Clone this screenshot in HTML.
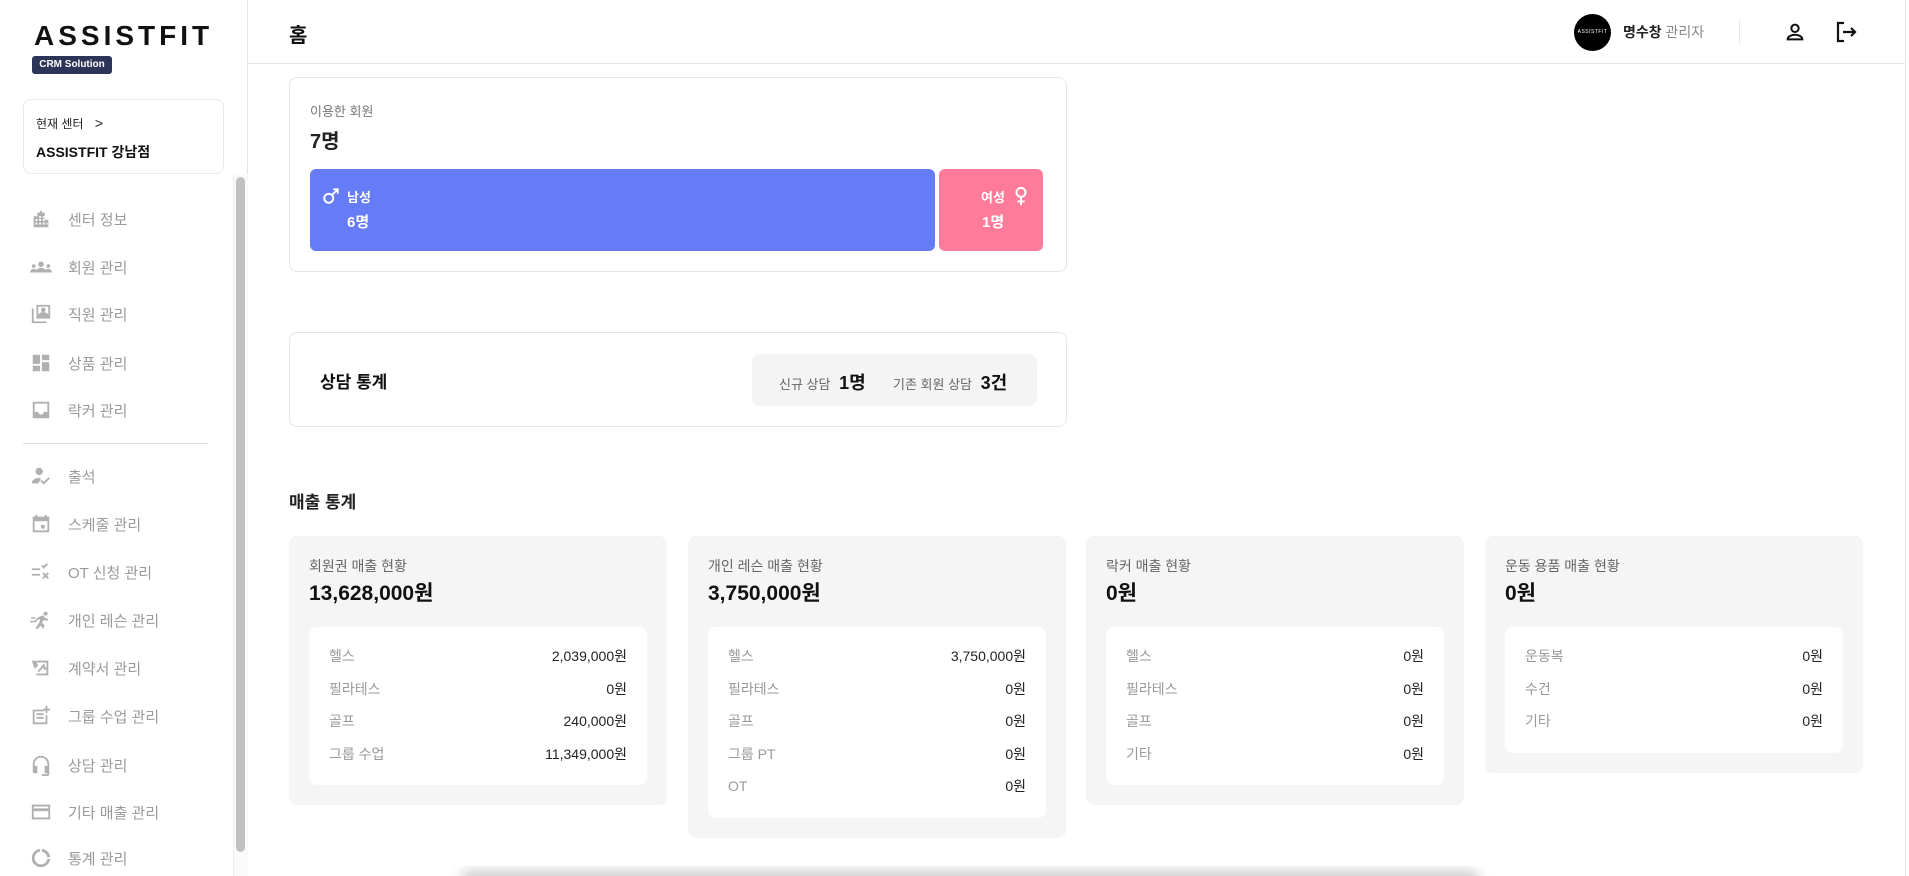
<!DOCTYPE html>
<html><head><meta charset="utf-8">
<style>
*{margin:0;padding:0;box-sizing:border-box}
html,body{width:1909px;height:876px;max-height:876px;overflow:hidden;background:#fff;font-family:"Liberation Sans","Noto Sans CJK KR",sans-serif;color:#111}
body{position:relative}
.abs{position:absolute}
#side{position:absolute;left:0;top:0;width:248px;height:876px;border-right:1px solid #e6e6e6;background:#fff}
.logo{left:34px;top:20px;font-size:28px;font-weight:700;letter-spacing:4px;color:#111;font-family:"Liberation Sans",sans-serif}
.badge{left:32px;top:56px;width:80px;height:18px;background:#2c3557;border-radius:3px;color:#fff;font-size:10px;font-weight:700;text-align:center;line-height:18px}
.cbox{left:23px;top:99px;width:201px;height:75px;border:1px solid #e8e8e8;border-radius:8px}
.menu{left:30px;font-size:15px;color:#9a9a9a;display:flex;align-items:center;height:24px}
.menu svg{width:22px;height:22px;margin-right:16px;fill:#b0b0b0}
#head{position:absolute;left:248px;top:0;right:4px;height:64px;border-bottom:1px solid #e6e6e6;background:#fff}
.card{border:1px solid #e6e6e6;border-radius:8px;background:#fff}
.sc{position:absolute;top:536px;width:378px;background:#f5f5f5;border-radius:8px;padding:20px}
.sc .lb{font-size:14px;line-height:18px;color:#666;margin-top:1px}
.sc .am{font-size:21px;line-height:26px;font-weight:700;margin-top:6px;color:#111}
.sc .in{background:#fff;border-radius:8px;margin-top:20px;padding:13px 20px 15px 20px}
.row{display:flex;justify-content:space-between;font-size:14px;height:32.5px;line-height:32.5px}
.row span:first-child{color:#999}
.row span:last-child{color:#222}
</style></head><body>
<div id="side">
  <div class="abs logo">ASSISTFIT</div>
  <div class="abs badge">CRM Solution</div>
  <div class="abs cbox">
    <div class="abs" style="left:12px;top:15px;font-size:12px;color:#222">현재 센터 <span style="margin-left:8px;font-size:14px">&gt;</span></div>
    <div class="abs" style="left:12px;top:42px;font-size:14px;font-weight:700;color:#111">ASSISTFIT 강남점</div>
  </div>
  <div class="abs" style="left:233px;top:174px;width:15px;height:702px;background:#fafafa;border-left:1px solid #eee"></div>
  <div class="abs" style="left:236px;top:177px;width:9px;height:675px;background:#c1c1c1;border-radius:5px"></div>
  <div class="abs" style="left:23px;top:443px;width:185px;height:1px;background:#e0e0e0"></div>

  <div class="abs menu" style="top:207px"><svg viewBox="0 0 24 24"><path d="M4 9h4V5h3V3h2v2h3v8h4v8H4z" /><path fill="#fff" d="M6 12h2v2H6zm0 4h2v2H6zm4-7h2v2h-2zm0 3h2v2h-2zm0 4h2v2h-2zm4-7h2v2h-2zm0 3h2v2h-2zm0 4h2v2h-2zm4 0h1v2h-1z"/></svg>센터 정보</div>
  <div class="abs menu" style="top:255px"><svg viewBox="0 0 24 24"><circle cx="12" cy="9" r="3"/><path d="M6 18c0-3 3-5 6-5s6 2 6 5z"/><circle cx="4" cy="11" r="2"/><circle cx="20" cy="11" r="2"/><path d="M0 18c0-2 2-4 4-4s3 1 3 2v2zm24 0c0-2-2-4-4-4s-3 1-3 2v2z"/></svg>회원 관리</div>
  <div class="abs menu" style="top:302px"><svg viewBox="0 0 24 24"><path d="M7 2h15v15H7zM2 6h2v14h14v2H2z"/><path fill="#fff" d="M9 4h11v9c-1-2-3-3-5.5-3S10 11 9 13z"/><circle cx="14.5" cy="7.5" r="2.5" fill="#b0b0b0"/></svg>직원 관리</div>
  <div class="abs menu" style="top:351px"><svg viewBox="0 0 24 24"><path d="M3 3h8v10H3zm10 0h8v6h-8zM3 15h8v6H3zm10-4h8v10h-8z"/></svg>상품 관리</div>
  <div class="abs menu" style="top:398px"><svg viewBox="0 0 24 24"><path d="M3 3h18v18H3zm2 2v9h4a3 3 0 0 0 6 0h4V5z"/></svg>락커 관리</div>

  <div class="abs menu" style="top:464px"><svg viewBox="0 0 24 24"><circle cx="10" cy="7" r="4"/><path d="M2 20c0-4 4-6 8-6l2 1-3 5z"/><path d="M12 17l3 3 6-6" stroke="#b0b0b0" stroke-width="2" fill="none"/></svg>출석</div>
  <div class="abs menu" style="top:512px"><svg viewBox="0 0 24 24"><path d="M3 4h18v17H3zm2 5v10h14V9z"/><path d="M6 2h2v3H6zm10 0h2v3h-2zM12 13h4v4h-4z"/></svg>스케줄 관리</div>
  <div class="abs menu" style="top:560px"><svg viewBox="0 0 24 24"><path d="M2 8h9v2H2zm0 6h9v2H2z"/><path d="M13 5l2 2 4-4M14 13l6 6m0-6l-6 6" stroke="#b0b0b0" stroke-width="2" fill="none"/></svg>OT 신청 관리</div>
  <div class="abs menu" style="top:608px"><svg viewBox="0 0 24 24"><circle cx="17" cy="5" r="2.2"/><path d="M9 9l5-2 3 3 3 1-1 2-4-1-2 3 3 3-2 4-2-4-4 4-2-1 4-6 1-4-3 1-2 3-2-1zM1 9h5v1.5H1zm-1 4h5v1.5H0z"/></svg>개인 레슨 관리</div>
  <div class="abs menu" style="top:656px"><svg viewBox="0 0 24 24"><path d="M5 4h15v16H7v-2h11V6H7V4zM2 4h4l3 5-4 4z"/><path d="M9 16l6-7 1 4 2-1" stroke="#b0b0b0" stroke-width="2" fill="none"/></svg>계약서 관리</div>
  <div class="abs menu" style="top:704px"><svg viewBox="0 0 24 24"><path d="M3 5h12v2H5v12h12v-8h2v10H3z"/><path d="M7 9h8v2H7zm0 4h8v2H7zm10-12h2v3h3v2h-3v3h-2V6h-3V4h3z"/></svg>그룹 수업 관리</div>
  <div class="abs menu" style="top:753px"><svg viewBox="0 0 24 24"><path d="M12 2a9 9 0 0 0-9 9v8a2 2 0 0 0 2 2h3v-8H5v-2a7 7 0 0 1 14 0v2h-3v8h3v1h-6v2h6a2 2 0 0 0 2-2V11a9 9 0 0 0-9-9z"/></svg>상담 관리</div>
  <div class="abs menu" style="top:800px"><svg viewBox="0 0 24 24"><path d="M2 4h20v16H2zm2 2v2h16V6zm0 5v7h16v-7z"/></svg>기타 매출 관리</div>
  <div class="abs menu" style="top:846px"><svg viewBox="0 0 24 24"><path d="M13 2.05v3.03A7 7 0 0 1 18.92 11h3.03A10 10 0 0 0 13 2.05zM11 2.05A10 10 0 0 0 12 22a10 10 0 0 0 9.95-9h-3.03A7 7 0 1 1 11 5.08z"/></svg>통계 관리</div>
</div>

<div id="head">
  <div class="abs" style="left:41px;top:19px;font-size:20px;font-weight:700">홈</div>
  <div class="abs" style="left:1326px;top:14px;width:37px;height:37px;border-radius:50%;background:#000;color:#fff;font-size:5px;text-align:center;line-height:37px;letter-spacing:.5px">ASSISTFIT</div>
  <div class="abs" style="left:1375px;top:22px;font-size:14px"><b style="color:#222">명수창</b> <span style="color:#888">관리자</span></div>
  <div class="abs" style="left:1491px;top:20px;width:1px;height:24px;background:#e6e6e6"></div>
  <svg class="abs" style="left:1536px;top:21px" width="22" height="22" viewBox="0 0 24 24"><circle cx="12" cy="8" r="4" fill="none" stroke="#111" stroke-width="2.2"/><path d="M4 20c0-3 4-5 8-5s8 2 8 5z" fill="none" stroke="#111" stroke-width="2.2"/></svg>
  <svg class="abs" style="left:1586px;top:20px" width="24" height="24" viewBox="0 0 24 24"><path d="M10 3H4v18h6" fill="none" stroke="#111" stroke-width="2.2"/><path d="M9 12h12m-4-4 4 4-4 4" fill="none" stroke="#111" stroke-width="2.2"/></svg>
</div>
<div class="abs" style="left:1905px;top:0;width:1px;height:876px;background:#e6e6e6"></div>

<div class="abs card" style="left:289px;top:77px;width:778px;height:195px">
  <div class="abs" style="left:20px;top:23px;font-size:13px;color:#777">이용한 회원</div>
  <div class="abs" style="left:20px;top:47px;font-size:20px;font-weight:700;color:#222">7명</div>
  <div class="abs" style="left:20px;top:91px;width:625px;height:82px;background:#667bf6;border-radius:6px;color:#fff">
    <svg class="abs" style="left:12px;top:18px" width="18" height="18" viewBox="0 0 24 24"><circle cx="9" cy="15" r="6" fill="none" stroke="#fff" stroke-width="2.5"/><path d="M13 11l8-8m-6 0h6v6" fill="none" stroke="#fff" stroke-width="2.5"/></svg>
    <div class="abs" style="left:37px;top:18px;font-size:13px;font-weight:700">남성</div>
    <div class="abs" style="left:37px;top:42px;font-size:15px;font-weight:700">6명</div>
  </div>
  <div class="abs" style="left:649px;top:91px;width:104px;height:82px;background:#ff7b99;border-radius:6px;color:#fff">
    <div class="abs" style="left:42px;top:18px;font-size:13px;font-weight:700">여성</div>
    <svg class="abs" style="left:74px;top:17px" width="16" height="20" viewBox="0 0 16 22"><circle cx="8" cy="7" r="5" fill="none" stroke="#fff" stroke-width="2.2"/><path d="M8 12v9M4 17h8" stroke="#fff" stroke-width="2.2"/></svg>
    <div class="abs" style="left:43px;top:42px;font-size:15px;font-weight:700">1명</div>
  </div>
</div>

<div class="abs card" style="left:289px;top:332px;width:778px;height:95px">
  <div class="abs" style="left:30px;top:35px;font-size:17px;font-weight:700;color:#111">상담 통계</div>
  <div class="abs" style="left:462px;top:21px;width:285px;height:52px;background:#f4f4f4;border-radius:8px;font-size:13px;color:#666">
    <div class="abs" style="left:27px;top:15px;white-space:nowrap">신규 상담 <b style="font-size:18px;color:#111;margin-left:5px">1명</b></div>
    <div class="abs" style="left:141px;top:15px;white-space:nowrap">기존 회원 상담 <b style="font-size:18px;color:#111;margin-left:5px">3건</b></div>
  </div>
</div>

<div class="abs" style="left:289px;top:488px;font-size:17px;font-weight:700;color:#222">매출 통계</div>

<div class="sc" style="left:289px;height:269px">
  <div class="lb">회원권 매출 현황</div><div class="am">13,628,000원</div>
  <div class="in">
    <div class="row"><span>헬스</span><span>2,039,000원</span></div>
    <div class="row"><span>필라테스</span><span>0원</span></div>
    <div class="row"><span>골프</span><span>240,000원</span></div>
    <div class="row"><span>그룹 수업</span><span>11,349,000원</span></div>
  </div>
</div>
<div class="sc" style="left:688px;height:302px">
  <div class="lb">개인 레슨 매출 현황</div><div class="am">3,750,000원</div>
  <div class="in">
    <div class="row"><span>헬스</span><span>3,750,000원</span></div>
    <div class="row"><span>필라테스</span><span>0원</span></div>
    <div class="row"><span>골프</span><span>0원</span></div>
    <div class="row"><span>그룹 PT</span><span>0원</span></div>
    <div class="row"><span>OT</span><span>0원</span></div>
  </div>
</div>
<div class="sc" style="left:1086px;height:269px">
  <div class="lb">락커 매출 현황</div><div class="am">0원</div>
  <div class="in">
    <div class="row"><span>헬스</span><span>0원</span></div>
    <div class="row"><span>필라테스</span><span>0원</span></div>
    <div class="row"><span>골프</span><span>0원</span></div>
    <div class="row"><span>기타</span><span>0원</span></div>
  </div>
</div>
<div class="sc" style="left:1485px;height:237px">
  <div class="lb">운동 용품 매출 현황</div><div class="am">0원</div>
  <div class="in">
    <div class="row"><span>운동복</span><span>0원</span></div>
    <div class="row"><span>수건</span><span>0원</span></div>
    <div class="row"><span>기타</span><span>0원</span></div>
  </div>
</div>

<div class="abs" style="left:440px;top:866px;width:1060px;height:10px;overflow:hidden">
  <div style="position:absolute;left:20px;right:20px;top:4px;height:20px;background:rgba(0,0,0,.18);border-radius:20px;filter:blur(6px)"></div>
</div>
</body></html>
